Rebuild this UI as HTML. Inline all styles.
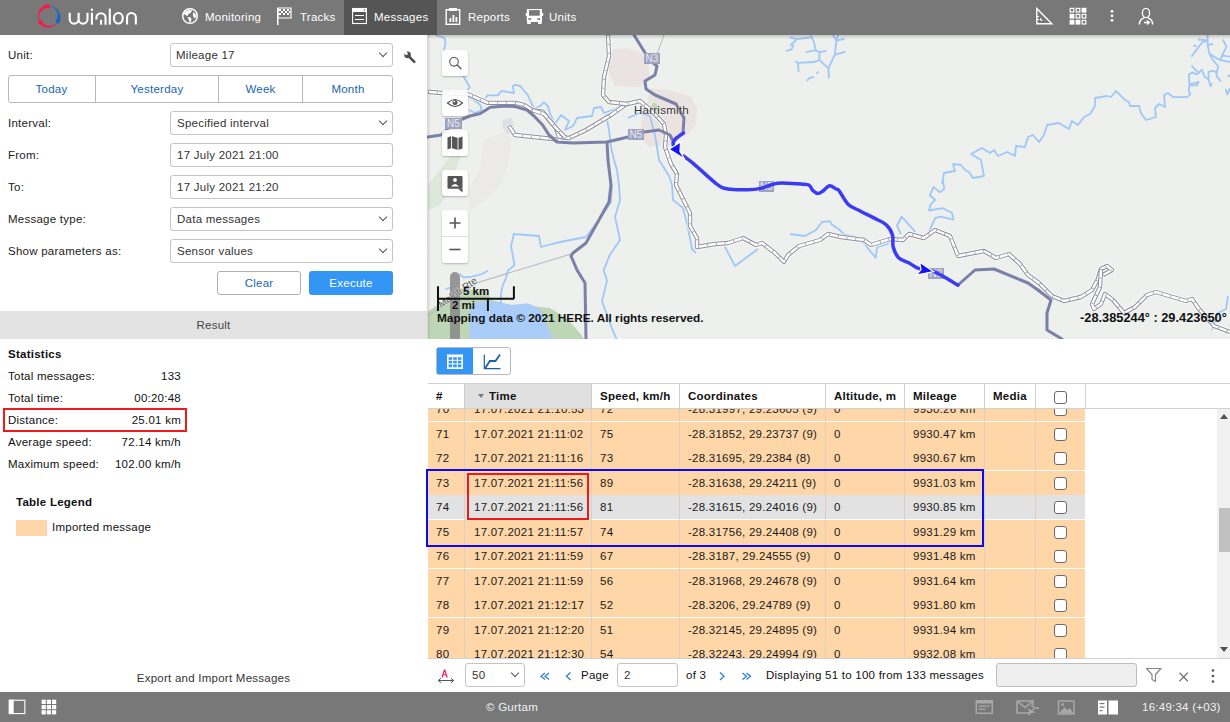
<!DOCTYPE html>
<html><head><meta charset="utf-8">
<style>
*{box-sizing:border-box;margin:0;padding:0}
html,body{width:1230px;height:722px;overflow:hidden;background:#fff}
body{position:relative;font-family:"Liberation Sans",sans-serif;font-size:12px;color:#222}
.a{position:absolute}
.t{position:absolute;font-size:11.5px;letter-spacing:.25px;line-height:14px;white-space:nowrap}
.b{font-weight:bold}
.sel{position:absolute;border:1px solid #c4c4c4;border-radius:3px;background:#fff}
.chev{position:absolute;width:6px;height:6px;border-right:1.3px solid #555;border-bottom:1.3px solid #555;transform:rotate(45deg)}
.btn{position:absolute;border:1px solid #b8b8b8;border-radius:3px;background:#fff;color:#1f6fb8;text-align:center;line-height:22px}
.hdr{position:absolute;left:0;top:0;width:1230px;height:35px;background:#787878}
.nav{position:absolute;top:0;height:35px;color:#fff}
.foot{position:absolute;left:0;top:692px;width:1230px;height:30px;background:#787878}
.mbtn{position:absolute;left:442px;width:26px;height:26px;background:rgba(255,255,255,.88);border-radius:3px;box-shadow:0 1px 2px rgba(0,0,0,.25)}
.row{position:absolute;left:428px;width:658px;height:24px;background:#fed6a7}
.cell{position:absolute;font-size:11.5px;letter-spacing:.25px;line-height:14px;white-space:nowrap;color:#1a1a1a}
.vl{position:absolute;width:1px;background:#d2c4b4}
.cb{position:absolute;width:13px;height:13px;border:1px solid #6a6a6a;border-radius:3px;background:#fff}
</style></head><body>

<!-- HEADER -->
<div class="hdr"></div>
<div class="a" style="left:344px;top:0;width:93px;height:35px;background:#555"></div>
<svg class="a" style="left:0;top:0" width="600" height="35" viewBox="0 0 600 35">
 <!-- logo ring -->
 <path d="M47.73 4.15 L47.18 4.35 L46.63 4.53 L46.10 4.72 L45.57 4.92 L45.06 5.15 L44.56 5.39 L44.08 5.65 L43.60 5.93 L43.15 6.23 L42.71 6.55 L42.28 6.89 L41.87 7.24 L41.48 7.61 L41.11 8.00 L40.76 8.40 L40.43 8.81 L40.12 9.24 L39.83 9.67 L39.56 10.12 L39.31 10.58 L39.08 11.05 L38.88 11.53 L38.70 12.01 L38.54 12.50 L38.41 13.00 L38.30 13.50 L38.21 14.00 L38.15 14.50 L38.11 15.01 L38.09 15.51 L38.10 16.01 L38.13 16.51 L38.18 17.01 L38.25 17.50 L38.35 17.99 L38.47 18.46 L38.61 18.94 L38.77 19.40 L38.95 19.85 L39.16 20.30 L39.53 20.15 L39.39 19.70 L39.28 19.25 L39.19 18.79 L39.13 18.33 L39.08 17.87 L39.06 17.42 L39.06 16.96 L39.08 16.50 L39.12 16.05 L39.18 15.60 L39.26 15.16 L39.37 14.72 L39.49 14.29 L39.64 13.87 L39.80 13.45 L39.99 13.05 L40.19 12.66 L40.41 12.28 L40.64 11.91 L40.90 11.56 L41.17 11.22 L41.45 10.89 L41.75 10.58 L42.06 10.29 L42.38 10.01 L42.72 9.75 L43.06 9.51 L43.42 9.29 L43.79 9.08 L44.16 8.90 L44.54 8.74 L44.92 8.59 L45.32 8.47 L45.71 8.37 L46.11 8.29 L46.51 8.24 L46.90 8.21 L47.30 8.20 L47.70 8.23 L48.09 8.33Z" fill="#ff1450"/>
 <circle cx="47.91" cy="6.24" r="2.10" fill="#ff1450"/>
 <path d="M38.54 22.81 L38.96 23.22 L39.35 23.62 L39.76 24.02 L40.17 24.39 L40.60 24.75 L41.04 25.08 L41.49 25.40 L41.95 25.70 L42.42 25.97 L42.90 26.22 L43.39 26.45 L43.89 26.65 L44.39 26.83 L44.90 26.99 L45.42 27.12 L45.94 27.23 L46.46 27.32 L46.98 27.38 L47.51 27.41 L48.03 27.43 L48.55 27.41 L49.07 27.38 L49.58 27.32 L50.09 27.23 L50.60 27.13 L51.09 27.00 L51.58 26.85 L52.06 26.67 L52.53 26.48 L52.98 26.26 L53.43 26.02 L53.86 25.76 L54.28 25.49 L54.69 25.19 L55.08 24.88 L55.45 24.55 L55.81 24.21 L56.14 23.85 L56.47 23.47 L56.77 23.08 L56.46 22.83 L56.13 23.16 L55.78 23.48 L55.42 23.78 L55.04 24.06 L54.66 24.32 L54.26 24.56 L53.85 24.78 L53.44 24.98 L53.02 25.16 L52.59 25.32 L52.15 25.46 L51.71 25.57 L51.27 25.67 L50.82 25.74 L50.37 25.79 L49.92 25.82 L49.48 25.83 L49.03 25.82 L48.59 25.78 L48.15 25.72 L47.71 25.65 L47.29 25.55 L46.86 25.43 L46.45 25.29 L46.05 25.13 L45.65 24.95 L45.27 24.76 L44.90 24.55 L44.54 24.31 L44.19 24.07 L43.86 23.80 L43.55 23.52 L43.25 23.23 L42.97 22.92 L42.70 22.60 L42.46 22.27 L42.24 21.92 L42.04 21.57 L41.87 21.20 L41.76 20.80Z" fill="#ff1450"/>
 <circle cx="40.15" cy="21.81" r="1.90" fill="#ff1450"/>
 <path d="M50.61 6.16 L51.10 6.25 L51.59 6.35 L52.07 6.48 L52.55 6.62 L53.03 6.79 L53.50 6.97 L53.96 7.18 L54.42 7.41 L54.86 7.66 L55.30 7.93 L55.72 8.22 L56.13 8.54 L56.53 8.87 L56.92 9.22 L57.29 9.59 L57.64 9.98 L57.98 10.38 L58.30 10.81 L58.60 11.25 L58.88 11.70 L59.14 12.17 L59.38 12.65 L59.60 13.15 L59.79 13.66 L59.97 14.18 L60.11 14.71 L60.24 15.25 L60.34 15.80 L60.41 16.35 L60.46 16.91 L60.48 17.47 L60.48 18.04 L60.44 18.61 L60.38 19.18 L60.30 19.75 L60.18 20.32 L60.04 20.89 L59.87 21.45 L59.68 22.00 L59.45 22.55 L55.81 20.45 L56.06 20.14 L56.29 19.81 L56.51 19.47 L56.71 19.12 L56.89 18.76 L57.05 18.38 L57.20 17.99 L57.33 17.60 L57.43 17.19 L57.52 16.78 L57.59 16.36 L57.63 15.94 L57.66 15.51 L57.66 15.08 L57.64 14.64 L57.60 14.21 L57.54 13.77 L57.45 13.34 L57.34 12.91 L57.21 12.48 L57.06 12.06 L56.88 11.64 L56.68 11.23 L56.46 10.83 L56.22 10.44 L55.96 10.06 L55.68 9.70 L55.38 9.34 L55.06 9.01 L54.72 8.68 L54.37 8.38 L53.99 8.09 L53.61 7.82 L53.20 7.57 L52.79 7.34 L52.36 7.13 L51.92 6.95 L51.46 6.79 L51.00 6.66 L50.54 6.55Z" fill="#1565c8"/>
 <circle cx="57.63" cy="21.50" r="2.10" fill="#1565c8"/>
 <g fill="none" stroke="#fff" stroke-width="2.1">
  <path d="M69.7 12.7 V19.15 A4.45 4.45 0 0 0 78.6 19.15 V12.7 M78.6 19.15 A4.45 4.45 0 0 0 87.5 19.15 V12.7"/>
  <path d="M91.9 12.7 V24.7"/>
  <path d="M96.4 19.6 V17.8 A4.575 4.575 0 0 1 105.55 17.8 V24.7"/>
  <path d="M109.8 8.6 V24.6"/>
  <ellipse cx="118.35" cy="18.25" rx="4.4" ry="5.3"/>
  <path d="M127.05 24.6 V17.35 A4.4 4.4 0 0 1 135.85 17.35 V24.6"/>
 </g>
 <rect x="90.85" y="8.6" width="2.1" height="2.3" fill="#fff"/>
 <rect x="100" y="19.8" width="2.1" height="4.9" fill="#fff"/>
 <!-- globe -->
 <g transform="translate(190,16)">
  <circle r="7.3" fill="none" stroke="#fff" stroke-width="1.5"/>
  <path d="M-5.5 -4 C-3 -6 0 -6.5 2 -5.8 L1 -3.5 L-1.5 -2 L-2.5 0 L-4.5 -1 L-6 -2 Z" fill="#fff"/>
  <path d="M-2.5 1 L1 1.5 L1.5 4 L0 7 L-1 4.5 Z" fill="#fff"/>
  <path d="M3.5 -4 L5 -2.5 L6.5 0 L5 2.5 L3.5 1 L2.8 -1.5 Z" fill="#fff"/>
 </g>
 <!-- flag -->
 <g fill="#fff">
  <rect x="277" y="8" width="1.5" height="17"/>
  <path d="M278 8 H291 V18 H278 Z" fill="none" stroke="#fff" stroke-width="1.2"/>
  <rect x="279" y="9" width="2" height="2"/><rect x="283" y="9" width="2" height="2"/><rect x="287" y="9" width="2" height="2"/>
  <rect x="281" y="11" width="2" height="2"/><rect x="285" y="11" width="2" height="2"/><rect x="289" y="11" width="1.5" height="2"/>
  <rect x="279" y="13" width="2" height="2"/><rect x="283" y="13" width="2" height="2"/><rect x="287" y="13" width="2" height="2"/>
 </g>
 <!-- messages doc -->
 <rect x="352.6" y="8.5" width="13.8" height="15" fill="none" stroke="#fff" stroke-width="1.1"/>
 <rect x="352.1" y="8" width="14.8" height="4" fill="#fff"/>
 <circle cx="364.4" cy="10" r="0.8" fill="#555"/>
 <path d="M355 15.5 H364 M355 19.5 H364" stroke="#fff" stroke-width="1"/>
 <!-- reports -->
 <g fill="none" stroke="#fff" stroke-width="1.4">
  <rect x="446.2" y="9.7" width="13.5" height="14.6"/>
 </g>
 <rect x="449" y="8" width="8" height="3" fill="#fff"/>
 <rect x="449.5" y="18" width="1.8" height="4" fill="#fff"/>
 <rect x="452.5" y="15" width="1.8" height="7" fill="#fff"/>
 <rect x="455.5" y="17" width="1.8" height="5" fill="#fff"/>
 <!-- units bus -->
 <path d="M526.8 9 H542 V22 H541.6 V24 H538 V22 H530.8 V24 H527.2 V22 H526.8 Z" fill="#fff"/>
 <rect x="529" y="10.1" width="10.8" height="5.6" fill="#787878"/>
 <rect x="528.3" y="18.2" width="2.9" height="1.6" fill="#787878"/>
 <rect x="537.3" y="18.2" width="2.9" height="1.6" fill="#787878"/>
 <rect x="525.8" y="13" width="1.2" height="3" fill="#fff"/><rect x="541.8" y="13" width="1.4" height="3" fill="#fff"/>
</svg>
<div class="t" style="left:205px;top:10px;color:#fff">Monitoring</div>
<div class="t" style="left:300px;top:10px;color:#fff">Tracks</div>
<div class="t" style="left:374px;top:10px;color:#fff">Messages</div>
<div class="t" style="left:468px;top:10px;color:#fff">Reports</div>
<div class="t" style="left:549px;top:10px;color:#fff">Units</div>
<svg class="a" style="left:1030px;top:0" width="200" height="35" viewBox="1030 0 200 35">
 <!-- ruler triangle -->
 <path d="M1036.8 8.5 V23.7 H1051.8 Z" fill="none" stroke="#fff" stroke-width="1.4" stroke-linejoin="miter"/>
 <path d="M1036.8 16.5 H1039 M1036.8 19.5 H1039" stroke="#fff" stroke-width="1"/>
 <path d="M1040 18 L1043 20.5 H1040 Z" fill="#fff"/>
 <!-- grid 3x3 -->
 <g fill="none" stroke="#fff" stroke-width="1.2">
  <rect x="1070.2" y="8.4" width="3.6" height="3.6"/><rect x="1076.2" y="8.4" width="3.6" height="3.6"/>
  <rect x="1076.2" y="14.4" width="3.6" height="3.6"/><rect x="1082.2" y="14.4" width="3.6" height="3.6"/>
  <rect x="1082.2" y="20.4" width="3.6" height="3.6"/>
 </g>
 <g fill="#fff">
  <rect x="1081.6" y="7.8" width="4.8" height="4.8"/>
  <rect x="1069.6" y="13.8" width="4.8" height="4.8"/>
  <rect x="1069.6" y="19.8" width="4.8" height="4.8"/><rect x="1075.6" y="19.8" width="4.8" height="4.8"/>
 </g>
 <!-- dots -->
 <g fill="#fff"><circle cx="1112" cy="11.3" r="1.4"/><circle cx="1112" cy="15.8" r="1.4"/><circle cx="1112" cy="20.3" r="1.4"/></g>
 <!-- user -->
 <g fill="none" stroke="#fff" stroke-width="1.4">
  <ellipse cx="1146" cy="13" rx="3.6" ry="4.6"/>
  <path d="M1139.3 24.5 C1139.5 20.5 1142 18.5 1144 18 M1148 18 C1150 18.5 1152.5 20.5 1152.7 24.5"/>
 </g>
 <path d="M1144 22.5 H1148.5 M1147 20.5 L1149.3 22.5 L1147 24.5" fill="none" stroke="#fff" stroke-width="1.3"/>
</svg>

<!-- LEFT PANEL -->
<div class="t" style="left:8px;top:48px">Unit:</div>
<div class="sel" style="left:170px;top:43px;width:223px;height:24px"></div>
<div class="t" style="left:176px;top:48px;color:#333">Mileage 17</div>
<div class="chev" style="left:380px;top:50px"></div>
<svg class="a" style="left:400px;top:48px" width="18" height="18" viewBox="400 48 18 18">
 <path d="M409 56.5 L414.3 61.8" stroke="#505050" stroke-width="2.6" stroke-linecap="round"/>
 <circle cx="407.6" cy="54.9" r="3.3" fill="#505050"/>
 <circle cx="406.5" cy="53.8" r="1.3" fill="#fff"/>
 <path d="M405.6 54.6 L403 52 L405.2 49.8 L407.4 52.7 Z" fill="#fff"/>
</svg>
<div class="a" style="left:8px;top:75px;width:385px;height:28px;border:1px solid #b8b8b8;border-radius:3px"></div>
<div class="a" style="left:95px;top:76px;width:1px;height:26px;background:#b8b8b8"></div>
<div class="a" style="left:218px;top:76px;width:1px;height:26px;background:#b8b8b8"></div>
<div class="a" style="left:302px;top:76px;width:1px;height:26px;background:#b8b8b8"></div>
<div class="t" style="left:8px;top:82px;width:87px;text-align:center;color:#1a64b0">Today</div>
<div class="t" style="left:96px;top:82px;width:122px;text-align:center;color:#1a64b0">Yesterday</div>
<div class="t" style="left:219px;top:82px;width:83px;text-align:center;color:#1a64b0">Week</div>
<div class="t" style="left:303px;top:82px;width:90px;text-align:center;color:#1a64b0">Month</div>

<div class="t" style="left:8px;top:116px">Interval:</div>
<div class="sel" style="left:170px;top:111px;width:223px;height:24px"></div>
<div class="t" style="left:177px;top:116px;color:#333">Specified interval</div>
<div class="chev" style="left:380px;top:118px"></div>

<div class="t" style="left:8px;top:148px">From:</div>
<div class="sel" style="left:170px;top:143px;width:223px;height:24px"></div>
<div class="t" style="left:177px;top:148px;color:#333">17 July 2021 21:00</div>

<div class="t" style="left:8px;top:180px">To:</div>
<div class="sel" style="left:170px;top:175px;width:223px;height:24px"></div>
<div class="t" style="left:177px;top:180px;color:#333">17 July 2021 21:20</div>

<div class="t" style="left:8px;top:212px">Message type:</div>
<div class="sel" style="left:170px;top:207px;width:223px;height:24px"></div>
<div class="t" style="left:177px;top:212px;color:#333">Data messages</div>
<div class="chev" style="left:380px;top:214px"></div>

<div class="t" style="left:8px;top:244px">Show parameters as:</div>
<div class="sel" style="left:170px;top:239px;width:223px;height:24px"></div>
<div class="t" style="left:177px;top:244px;color:#333">Sensor values</div>
<div class="chev" style="left:380px;top:246px"></div>

<div class="a" style="left:217px;top:271px;width:84px;height:24px;border:1px solid #b0b0b0;border-radius:3px"></div>
<div class="t" style="left:217px;top:276px;width:84px;text-align:center;color:#1a64b0">Clear</div>
<div class="a" style="left:309px;top:271px;width:84px;height:24px;background:#3396f4;border-radius:3px"></div>
<div class="t" style="left:309px;top:276px;width:84px;text-align:center;color:#fff">Execute</div>

<div class="a" style="left:0;top:311px;width:427px;height:28px;background:#e3e3e3"></div>
<div class="t" style="left:0;top:318px;width:427px;text-align:center;color:#444">Result</div>

<div class="t b" style="left:8px;top:347px;color:#111">Statistics</div>
<div class="t" style="left:8px;top:369px;color:#111">Total messages:</div>
<div class="t" style="left:8px;top:369px;width:173px;text-align:right;color:#111">133</div>
<div class="t" style="left:8px;top:391px;color:#111">Total time:</div>
<div class="t" style="left:8px;top:391px;width:173px;text-align:right;color:#111">00:20:48</div>
<div class="t" style="left:8px;top:413px;color:#111">Distance:</div>
<div class="t" style="left:8px;top:413px;width:173px;text-align:right;color:#111">25.01 km</div>
<div class="t" style="left:8px;top:435px;color:#111">Average speed:</div>
<div class="t" style="left:8px;top:435px;width:173px;text-align:right;color:#111">72.14 km/h</div>
<div class="t" style="left:8px;top:457px;color:#111">Maximum speed:</div>
<div class="t" style="left:8px;top:457px;width:173px;text-align:right;color:#111">102.00 km/h</div>
<div class="a" style="left:3px;top:408px;width:184px;height:24px;border:2px solid #ec1a1a"></div>

<div class="t b" style="left:16px;top:495px;color:#111">Table Legend</div>
<div class="a" style="left:16px;top:520px;width:31px;height:16px;background:#fed6a7"></div>
<div class="t" style="left:52px;top:520px;color:#111">Imported message</div>

<div class="t" style="left:0;top:671px;width:427px;text-align:center;color:#333">Export and Import Messages</div>

<!-- MAP -->
<svg class="a" style="left:427px;top:35px" width="803" height="304" viewBox="427 35 803 304">
<rect x="427" y="35" width="803" height="304" fill="#eef0ee"/>
<path d="M611 50 L625 48 L640 52 L648 62 L650 80 L640 87 L615 86 L608 70 Z" fill="#e9dfdc" opacity="0.75"/>
<path d="M650 88 L668 90 L690 96 L697 108 L696 125 L688 134 L668 147 L648 146 L640 136 L642 118 L648 100 Z" fill="#e9dfdc" opacity="0.75"/>
<path d="M484 140 L505 132 L512 140 L508 165 L500 185 L485 200 L470 210 L468 190 L480 170 Z" fill="#e9dfdc" opacity="0.38"/>
<path d="M503 120 L512 118 L515 132 L507 134 L502 127 Z" fill="#dcdae4" opacity="0.8"/>
<path d="M428 185 L440 170 L455 150 L462 153 L455 172 L450 190 L440 205 L428 210 Z" fill="#bdd6b5" opacity="0.35"/>
<path d="M428 311.5 L439.6 303.2 L459.6 288.3 L486 291.6 L492 300 L511 305 L535.3 306.4 L550 308 L566 317.8 L580.8 334 L584 339 L428 339 Z" fill="#bdd6b5"/>
<path d="M469.6 339 L469.6 310.7 L477 301.6 L494.5 301.6 L511 305 L528 303.2 L535 306.4 L541.8 311.3 L545 321 L553 339 Z" fill="#a9ccf8"/>
<path d="M654 102 L660 108 L655 115 L650 108 Z" fill="#bdd6b5"/>
<path d="M435.5 35.0 L444.5 38.0 L445.5 43.0 L444.0 50.0 L451.0 60.0 L464.0 77.0 L469.7 87.3 L467.3 90.0" fill="none" stroke="#9ec8f8" stroke-width="1.8" stroke-linejoin="round"/>
<path d="M468.0 97.0 L474.0 100.0 L480.3 105.0 L481.6 110.0 L475.0 113.0 L469.0 110.0" fill="none" stroke="#9ec8f8" stroke-width="1.8" stroke-linejoin="round"/>
<path d="M485.3 98.6 L487.2 95.4 L497.8 95.4 L501.5 91.0 L514.0 93.0 L512.7 86.0 L515.2 84.8 L520.2 86.0 L527.7 94.8 L534.0 108.5 L540.2 106.0 L543.9 102.3 L548.0 106.0 L550.0 114.0 L555.0 124.0 L561.0 115.0 L569.0 121.0 L565.0 130.0 L573.0 126.0 L577.0 118.0 L592.0 116.0 L594.0 108.0 L601.0 107.0 L604.0 113.0 L615.0 109.0 L621.0 106.0 L628.0 103.0" fill="none" stroke="#9ec8f8" stroke-width="1.8" stroke-linejoin="round"/>
<path d="M606.0 114.0 L609.0 130.0 L611.0 147.0 L614.0 160.0 L617.0 170.0 L619.0 185.0 L620.0 200.0 L615.0 217.0 L618.0 230.0 L620.0 240.0 L610.0 254.4 L603.6 270.6 L607.0 280.4 L602.0 301.5 L611.7 327.6 L616.6 339.0" fill="none" stroke="#9ec8f8" stroke-width="1.8" stroke-linejoin="round"/>
<path d="M513.0 234.0 L539.0 236.0 L541.0 247.0 L552.0 244.0 L565.0 241.0 L586.0 237.0 L601.0 217.0 L611.0 202.0 L612.0 185.0" fill="none" stroke="#9ec8f8" stroke-width="1.8" stroke-linejoin="round"/>
<path d="M459.6 274.0 L463.7 277.5 L472.0 276.6 L482.0 274.0 L487.9 270.8" fill="none" stroke="#9ec8f8" stroke-width="1.8" stroke-linejoin="round"/>
<path d="M445.5 289.0 L452.0 287.4" fill="none" stroke="#9ec8f8" stroke-width="1.8" stroke-linejoin="round"/>
<path d="M628.0 118.0 L640.0 113.0 L650.0 116.0 L655.0 135.0 L657.0 147.0 L659.0 160.0 L669.0 176.0 L672.0 185.0 L673.0 200.0 L683.0 208.0 L688.0 228.0 L692.0 249.0 L696.0 253.0" fill="none" stroke="#9ec8f8" stroke-width="1.8" stroke-linejoin="round"/>
<path d="M810.4 35.0 L814.0 42.2 L815.8 50.3 L819.4 52.1 L819.4 60.2 L828.4 68.3 L828.9 78.2" fill="none" stroke="#9ec8f8" stroke-width="1.8" stroke-linejoin="round"/>
<path d="M819.4 60.2 L814.0 62.0 L797.8 62.9 L795.1 61.1" fill="none" stroke="#9ec8f8" stroke-width="1.8" stroke-linejoin="round"/>
<path d="M797.8 62.9 L798.7 71.9" fill="none" stroke="#9ec8f8" stroke-width="1.8" stroke-linejoin="round"/>
<path d="M815.8 50.3 L805.9 52.1" fill="none" stroke="#9ec8f8" stroke-width="1.8" stroke-linejoin="round"/>
<path d="M819.4 52.1 L826.6 50.8" fill="none" stroke="#9ec8f8" stroke-width="1.8" stroke-linejoin="round"/>
<path d="M810.4 37.7 L796.9 39.0 L789.7 37.7" fill="none" stroke="#9ec8f8" stroke-width="1.8" stroke-linejoin="round"/>
<path d="M796.9 39.0 L794.2 42.2 L790.6 44.9 L793.3 45.8 L791.5 49.4 L786.1 51.2" fill="none" stroke="#9ec8f8" stroke-width="1.8" stroke-linejoin="round"/>
<path d="M828.4 68.3 L834.7 54.8 L845.5 51.7" fill="none" stroke="#9ec8f8" stroke-width="1.8" stroke-linejoin="round"/>
<path d="M834.7 54.8 L836.5 40.4 L844.6 39.0" fill="none" stroke="#9ec8f8" stroke-width="1.8" stroke-linejoin="round"/>
<path d="M836.5 40.4 L832.9 35.0" fill="none" stroke="#9ec8f8" stroke-width="1.8" stroke-linejoin="round"/>
<path d="M836.5 40.4 L838.3 35.0" fill="none" stroke="#9ec8f8" stroke-width="1.8" stroke-linejoin="round"/>
<path d="M806.8 80.9 L809.0 78.2 L814.0 76.9" fill="none" stroke="#9ec8f8" stroke-width="1.8" stroke-linejoin="round"/>
<path d="M816.7 73.7 L818.5 71.5" fill="none" stroke="#9ec8f8" stroke-width="1.8" stroke-linejoin="round"/>
<path d="M725.0 247.0 L735.0 266.0 L743.0 260.0 L758.0 249.0" fill="none" stroke="#9ec8f8" stroke-width="1.8" stroke-linejoin="round"/>
<path d="M790.0 234.0 L805.0 236.0 L816.0 230.0 L822.0 222.0 L830.0 221.1 L831.5 224.2 L839.1 229.5 L843.7 234.1 L855.9 237.1 L865.0 244.0 L868.1 248.6 L875.7 257.7 L877.2 247.0 L887.9 244.0 L887.9 237.9" fill="none" stroke="#9ec8f8" stroke-width="1.8" stroke-linejoin="round"/>
<path d="M897.0 225.7 L901.6 216.6 L915.3 231.8" fill="none" stroke="#9ec8f8" stroke-width="1.8" stroke-linejoin="round"/>
<path d="M901.6 216.6 L897.0 225.7 L900.9 234.1" fill="none" stroke="#9ec8f8" stroke-width="1.8" stroke-linejoin="round"/>
<path d="M929.0 231.8 L935.1 218.1 L940.5 216.6 L953.4 219.6 L951.9 212.8 L942.8 208.2 L929.0 210.5 L930.6 204.4 L935.1 199.8 L929.8 195.2 L933.6 186.9 L939.7 192.2 L944.3 189.1 L942.8 180.0" fill="none" stroke="#9ec8f8" stroke-width="1.8" stroke-linejoin="round"/>
<path d="M942.0 184.0 L944.0 173.0 L955.0 171.0 L953.0 164.0 L961.0 165.0 L965.0 170.0 L969.0 172.0 L973.0 178.0 L984.0 176.0 L981.0 160.0 L971.0 154.0 L982.0 148.0 L990.0 153.0 L994.0 150.0 L998.0 156.0 L1007.0 152.0 L1015.0 156.0 L1016.0 146.0 L1025.0 147.0 L1028.0 137.0 L1033.0 135.0 L1039.0 142.0 L1044.0 135.0 L1047.0 125.0 L1059.0 123.0 L1069.0 129.0 L1072.0 121.0 L1078.0 125.0 L1084.0 117.0 L1090.0 114.0 L1095.0 106.0 L1095.0 98.0 L1107.0 96.0 L1111.0 97.0 L1116.0 91.0 L1125.0 100.0 L1129.0 102.0 L1130.0 106.0 L1139.0 106.0 L1141.0 113.0 L1146.0 120.0 L1156.0 117.0 L1155.0 108.0 L1159.0 104.0 L1165.0 107.0 L1164.0 95.0 L1168.0 93.0 L1173.0 97.0 L1186.9 97.1 L1190.5 94.4 L1188.7 90.8" fill="none" stroke="#9ec8f8" stroke-width="1.8" stroke-linejoin="round"/>
<path d="M1188.7 90.8 L1189.6 84.5 L1198.6 81.8 L1196.8 85.4 L1190.5 85.4" fill="none" stroke="#9ec8f8" stroke-width="1.8" stroke-linejoin="round"/>
<path d="M1189.6 84.5 L1188.7 74.6 L1192.8 72.4 L1195.9 74.6 L1198.6 72.8 L1191.4 65.6" fill="none" stroke="#9ec8f8" stroke-width="1.8" stroke-linejoin="round"/>
<path d="M1198.6 72.8 L1201.8 69.7 L1204.9 77.3 L1208.5 79.1 L1208.5 71.9 L1213.0 70.6 L1216.6 72.8 L1216.6 76.4 L1221.1 81.4" fill="none" stroke="#9ec8f8" stroke-width="1.8" stroke-linejoin="round"/>
<path d="M1208.5 79.1 L1210.3 86.3 L1212.1 83.2" fill="none" stroke="#9ec8f8" stroke-width="1.8" stroke-linejoin="round"/>
<path d="M1216.6 72.8 L1218.4 66.5 L1213.0 60.2 L1209.4 53.9 L1207.6 44.9 L1207.6 35.0" fill="none" stroke="#9ec8f8" stroke-width="1.8" stroke-linejoin="round"/>
<path d="M1207.6 40.4 L1197.7 39.5" fill="none" stroke="#9ec8f8" stroke-width="1.8" stroke-linejoin="round"/>
<path d="M1207.6 40.4 L1202.2 42.2 L1191.4 56.6" fill="none" stroke="#9ec8f8" stroke-width="1.8" stroke-linejoin="round"/>
<path d="M1196.8 45.8 L1193.2 45.8" fill="none" stroke="#9ec8f8" stroke-width="1.8" stroke-linejoin="round"/>
<path d="M1207.6 44.9 L1213.0 44.0" fill="none" stroke="#9ec8f8" stroke-width="1.8" stroke-linejoin="round"/>
<path d="M1209.4 53.9 L1220.2 60.2 L1230.0 62.0" fill="none" stroke="#9ec8f8" stroke-width="1.8" stroke-linejoin="round"/>
<path d="M1220.2 60.2 L1222.0 55.7 L1226.5 46.7 L1222.9 39.5" fill="none" stroke="#9ec8f8" stroke-width="1.8" stroke-linejoin="round"/>
<path d="M1222.0 55.7 L1230.0 56.6" fill="none" stroke="#9ec8f8" stroke-width="1.8" stroke-linejoin="round"/>
<path d="M1227.4 75.5 L1230.0 76.0" fill="none" stroke="#9ec8f8" stroke-width="1.8" stroke-linejoin="round"/>
<path d="M1225.6 89.0 L1227.4 94.4 L1230.0 88.0" fill="none" stroke="#9ec8f8" stroke-width="1.8" stroke-linejoin="round"/>
<path d="M1228.0 296.0 L1226.0 309.0 L1218.0 313.0 L1212.0 330.0" fill="none" stroke="#9ec8f8" stroke-width="1.8" stroke-linejoin="round"/>
<path d="M501.0 303.2 L501.0 293.3 L502.8 285.0 L506.0 278.3 L507.8 270.8 L514.5 265.0 L513.6 260.0 L511.0 246.0 L512.5 240.0 L514.0 233.0" fill="none" stroke="#9ec8f8" stroke-width="1.8" stroke-linejoin="round"/>
<path d="M571 254 L478 282.4 L428 315.7" fill="none" stroke="#b4b8c4" stroke-width="1.1"/>
<path d="M664 35 L657 54" fill="none" stroke="#b9bcc6" stroke-width="1"/>
<path d="M428.0 91.7 L441.7 93.0 L467.9 94.2 L487.8 102.9 L515.2 102.9 L524.0 104.8 L532.7 110.4 L542.6 111.6 L549.0 120.0 L556.0 128.0 L559.0 137.0 L569.0 138.0 L586.0 130.0 L611.0 115.0 L628.0 103.0" fill="none" stroke="#ffffff" stroke-width="6.2" stroke-linejoin="round" opacity="0.7"/>
<path d="M509.0 126.0 L515.0 135.0 L553.0 139.0 L563.0 141.0" fill="none" stroke="#ffffff" stroke-width="6.2" stroke-linejoin="round" opacity="0.7"/>
<path d="M532.0 110.0 L544.0 114.0 L556.0 128.0 L566.0 138.0" fill="none" stroke="#ffffff" stroke-width="6.2" stroke-linejoin="round" opacity="0.7"/>
<path d="M608.0 35.0 L609.0 56.0 L604.0 77.0 L603.0 95.0 L609.0 102.0 L627.0 104.0 L640.0 101.0 L653.0 112.0 L664.0 124.0 L666.0 135.0 L665.0 147.0 L671.0 164.0 L677.0 174.0 L676.0 185.0 L690.0 213.0 L690.0 226.0 L697.0 238.0 L697.0 247.0 L715.0 244.0 L728.0 243.0 L743.0 238.0 L756.0 245.0 L762.0 243.0 L775.0 253.0 L784.0 262.0 L788.0 255.0 L799.0 246.0 L820.0 240.0 L828.0 234.0 L841.0 237.0 L864.0 240.0 L871.0 245.0 L890.0 239.0 L903.0 240.0 L909.0 234.0 L924.0 238.0 L935.0 230.0 L950.0 236.0 L958.0 256.0 L984.0 251.0 L996.0 258.0 L1009.0 254.0 L1020.0 264.0 L1028.0 275.0 L1039.0 283.0 L1052.0 296.0 L1064.0 301.0 L1081.0 297.0 L1092.0 290.0 L1098.0 279.0 L1101.0 269.0 L1107.0 266.0 L1112.0 270.0 L1103.0 275.0" fill="none" stroke="#ffffff" stroke-width="6.2" stroke-linejoin="round" opacity="0.7"/>
<path d="M1101.0 269.0 L1100.0 287.0 L1092.0 304.0 L1094.0 309.0 L1101.0 304.0 L1105.0 294.0 L1113.0 300.0 L1124.0 313.0 L1135.0 307.0 L1147.0 295.0 L1156.0 292.0 L1186.0 301.0 L1192.0 299.0 L1199.0 309.0 L1214.0 326.0 L1230.0 332.0" fill="none" stroke="#ffffff" stroke-width="6.2" stroke-linejoin="round" opacity="0.7"/>
<path d="M428.0 91.7 L441.7 93.0 L467.9 94.2 L487.8 102.9 L515.2 102.9 L524.0 104.8 L532.7 110.4 L542.6 111.6 L549.0 120.0 L556.0 128.0 L559.0 137.0 L569.0 138.0 L586.0 130.0 L611.0 115.0 L628.0 103.0" fill="none" stroke="#8e8e9c" stroke-width="4.4" stroke-linejoin="round"/>
<path d="M428.0 91.7 L441.7 93.0 L467.9 94.2 L487.8 102.9 L515.2 102.9 L524.0 104.8 L532.7 110.4 L542.6 111.6 L549.0 120.0 L556.0 128.0 L559.0 137.0 L569.0 138.0 L586.0 130.0 L611.0 115.0 L628.0 103.0" fill="none" stroke="#ffffff" stroke-width="2.4" stroke-linejoin="round"/>
<path d="M428.0 91.7 L441.7 93.0 L467.9 94.2 L487.8 102.9 L515.2 102.9 L524.0 104.8 L532.7 110.4 L542.6 111.6 L549.0 120.0 L556.0 128.0 L559.0 137.0 L569.0 138.0 L586.0 130.0 L611.0 115.0 L628.0 103.0" fill="none" stroke="#a0a0ac" stroke-width="2.4" stroke-dasharray="0.9 8"/>
<path d="M509.0 126.0 L515.0 135.0 L553.0 139.0 L563.0 141.0" fill="none" stroke="#8e8e9c" stroke-width="4.4" stroke-linejoin="round"/>
<path d="M509.0 126.0 L515.0 135.0 L553.0 139.0 L563.0 141.0" fill="none" stroke="#ffffff" stroke-width="2.4" stroke-linejoin="round"/>
<path d="M509.0 126.0 L515.0 135.0 L553.0 139.0 L563.0 141.0" fill="none" stroke="#a0a0ac" stroke-width="2.4" stroke-dasharray="0.9 8"/>
<path d="M532.0 110.0 L544.0 114.0 L556.0 128.0 L566.0 138.0" fill="none" stroke="#8e8e9c" stroke-width="4.4" stroke-linejoin="round"/>
<path d="M532.0 110.0 L544.0 114.0 L556.0 128.0 L566.0 138.0" fill="none" stroke="#ffffff" stroke-width="2.4" stroke-linejoin="round"/>
<path d="M532.0 110.0 L544.0 114.0 L556.0 128.0 L566.0 138.0" fill="none" stroke="#a0a0ac" stroke-width="2.4" stroke-dasharray="0.9 8"/>
<path d="M608.0 35.0 L609.0 56.0 L604.0 77.0 L603.0 95.0 L609.0 102.0 L627.0 104.0 L640.0 101.0 L653.0 112.0 L664.0 124.0 L666.0 135.0 L665.0 147.0 L671.0 164.0 L677.0 174.0 L676.0 185.0 L690.0 213.0 L690.0 226.0 L697.0 238.0 L697.0 247.0 L715.0 244.0 L728.0 243.0 L743.0 238.0 L756.0 245.0 L762.0 243.0 L775.0 253.0 L784.0 262.0 L788.0 255.0 L799.0 246.0 L820.0 240.0 L828.0 234.0 L841.0 237.0 L864.0 240.0 L871.0 245.0 L890.0 239.0 L903.0 240.0 L909.0 234.0 L924.0 238.0 L935.0 230.0 L950.0 236.0 L958.0 256.0 L984.0 251.0 L996.0 258.0 L1009.0 254.0 L1020.0 264.0 L1028.0 275.0 L1039.0 283.0 L1052.0 296.0 L1064.0 301.0 L1081.0 297.0 L1092.0 290.0 L1098.0 279.0 L1101.0 269.0 L1107.0 266.0 L1112.0 270.0 L1103.0 275.0" fill="none" stroke="#8e8e9c" stroke-width="4.4" stroke-linejoin="round"/>
<path d="M608.0 35.0 L609.0 56.0 L604.0 77.0 L603.0 95.0 L609.0 102.0 L627.0 104.0 L640.0 101.0 L653.0 112.0 L664.0 124.0 L666.0 135.0 L665.0 147.0 L671.0 164.0 L677.0 174.0 L676.0 185.0 L690.0 213.0 L690.0 226.0 L697.0 238.0 L697.0 247.0 L715.0 244.0 L728.0 243.0 L743.0 238.0 L756.0 245.0 L762.0 243.0 L775.0 253.0 L784.0 262.0 L788.0 255.0 L799.0 246.0 L820.0 240.0 L828.0 234.0 L841.0 237.0 L864.0 240.0 L871.0 245.0 L890.0 239.0 L903.0 240.0 L909.0 234.0 L924.0 238.0 L935.0 230.0 L950.0 236.0 L958.0 256.0 L984.0 251.0 L996.0 258.0 L1009.0 254.0 L1020.0 264.0 L1028.0 275.0 L1039.0 283.0 L1052.0 296.0 L1064.0 301.0 L1081.0 297.0 L1092.0 290.0 L1098.0 279.0 L1101.0 269.0 L1107.0 266.0 L1112.0 270.0 L1103.0 275.0" fill="none" stroke="#ffffff" stroke-width="2.4" stroke-linejoin="round"/>
<path d="M608.0 35.0 L609.0 56.0 L604.0 77.0 L603.0 95.0 L609.0 102.0 L627.0 104.0 L640.0 101.0 L653.0 112.0 L664.0 124.0 L666.0 135.0 L665.0 147.0 L671.0 164.0 L677.0 174.0 L676.0 185.0 L690.0 213.0 L690.0 226.0 L697.0 238.0 L697.0 247.0 L715.0 244.0 L728.0 243.0 L743.0 238.0 L756.0 245.0 L762.0 243.0 L775.0 253.0 L784.0 262.0 L788.0 255.0 L799.0 246.0 L820.0 240.0 L828.0 234.0 L841.0 237.0 L864.0 240.0 L871.0 245.0 L890.0 239.0 L903.0 240.0 L909.0 234.0 L924.0 238.0 L935.0 230.0 L950.0 236.0 L958.0 256.0 L984.0 251.0 L996.0 258.0 L1009.0 254.0 L1020.0 264.0 L1028.0 275.0 L1039.0 283.0 L1052.0 296.0 L1064.0 301.0 L1081.0 297.0 L1092.0 290.0 L1098.0 279.0 L1101.0 269.0 L1107.0 266.0 L1112.0 270.0 L1103.0 275.0" fill="none" stroke="#a0a0ac" stroke-width="2.4" stroke-dasharray="0.9 8"/>
<path d="M1101.0 269.0 L1100.0 287.0 L1092.0 304.0 L1094.0 309.0 L1101.0 304.0 L1105.0 294.0 L1113.0 300.0 L1124.0 313.0 L1135.0 307.0 L1147.0 295.0 L1156.0 292.0 L1186.0 301.0 L1192.0 299.0 L1199.0 309.0 L1214.0 326.0 L1230.0 332.0" fill="none" stroke="#8e8e9c" stroke-width="4.4" stroke-linejoin="round"/>
<path d="M1101.0 269.0 L1100.0 287.0 L1092.0 304.0 L1094.0 309.0 L1101.0 304.0 L1105.0 294.0 L1113.0 300.0 L1124.0 313.0 L1135.0 307.0 L1147.0 295.0 L1156.0 292.0 L1186.0 301.0 L1192.0 299.0 L1199.0 309.0 L1214.0 326.0 L1230.0 332.0" fill="none" stroke="#ffffff" stroke-width="2.4" stroke-linejoin="round"/>
<path d="M1101.0 269.0 L1100.0 287.0 L1092.0 304.0 L1094.0 309.0 L1101.0 304.0 L1105.0 294.0 L1113.0 300.0 L1124.0 313.0 L1135.0 307.0 L1147.0 295.0 L1156.0 292.0 L1186.0 301.0 L1192.0 299.0 L1199.0 309.0 L1214.0 326.0 L1230.0 332.0" fill="none" stroke="#a0a0ac" stroke-width="2.4" stroke-dasharray="0.9 8"/>
<path d="M428.0 137.0 L441.0 135.0 L455.0 122.0 L470.0 116.0 L480.3 113.5 L490.3 107.3 L505.3 106.0 L515.2 106.6 L527.0 110.0 L534.0 116.0 L542.6 125.0 L549.0 135.0 L557.0 142.0 L573.0 143.0 L607.0 142.0 L628.0 137.0 L644.0 132.0 L659.0 130.0 L670.0 135.0 L673.0 141.0" fill="none" stroke="#7b80a7" stroke-width="3" stroke-linejoin="round" stroke-linecap="round"/>
<path d="M607.0 142.0 L608.0 160.0 L611.0 185.0 L609.0 202.0 L586.0 243.0 L573.0 253.0 L571.0 256.0 L577.0 270.0 L585.0 283.0 L586.0 339.0" fill="none" stroke="#7b80a7" stroke-width="3" stroke-linejoin="round" stroke-linecap="round"/>
<path d="M634.0 35.0 L647.0 56.0 L652.0 62.0 L657.0 66.0 L655.0 75.0 L645.0 81.0 L646.0 89.0 L655.0 95.0 L676.0 104.0 L684.0 118.0 L683.0 133.0 L676.0 138.0 L673.0 143.0" fill="none" stroke="#7b80a7" stroke-width="3" stroke-linejoin="round" stroke-linecap="round"/>
<path d="M958.0 285.0 L975.0 270.0 L994.0 269.0 L1028.0 283.0 L1038.0 290.0" fill="none" stroke="#7b80a7" stroke-width="3" stroke-linejoin="round" stroke-linecap="round"/>
<path d="M1038.0 290.0 L1051.0 300.0 L1047.0 313.0 L1047.0 330.0 L1062.0 339.0" fill="none" stroke="#7b80a7" stroke-width="3" stroke-linejoin="round" stroke-linecap="round"/>
<rect x="445" y="118" width="17" height="11" fill="#9fa3c0"/>
<text x="453.5" y="127" text-anchor="middle" font-family="Liberation Sans" font-size="10" fill="#e8e9f0">N5</text>
<rect x="644" y="53" width="16" height="11" fill="#9fa3c0"/>
<text x="652.0" y="62" text-anchor="middle" font-family="Liberation Sans" font-size="10" fill="#e8e9f0">N3</text>
<rect x="628" y="129" width="16" height="11" fill="#9fa3c0"/>
<text x="636.0" y="138" text-anchor="middle" font-family="Liberation Sans" font-size="10" fill="#e8e9f0">N5</text>
<rect x="928" y="268" width="16" height="11" fill="#9fa3c0"/>
<text x="936.0" y="277" text-anchor="middle" font-family="Liberation Sans" font-size="10" fill="#e8e9f0">N3</text>
<rect x="759" y="181" width="15" height="11" fill="#9fa3c0"/>
<text x="766.5" y="190" text-anchor="middle" font-family="Liberation Sans" font-size="10" fill="#e8e9f0">N5</text>
<path d="M683.5 133.0 C682.2 133.9 677.7 137.0 676.0 138.5 C674.3 140.0 674.0 140.8 673.5 142.0 C673.0 143.2 673.3 144.9 673.3 145.5" fill="none" stroke="#3b3bf2" stroke-width="3.5" stroke-linejoin="round" stroke-linecap="round"/>
<path d="M683.5 156.0 C685.3 157.4 688.8 159.7 694.3 164.3 C699.8 168.9 710.8 179.7 716.4 183.8 C722.0 187.9 722.8 188.0 728.0 189.0 C733.2 190.0 742.2 189.8 747.6 189.7 C753.0 189.6 755.6 189.5 760.6 188.4 C765.6 187.3 771.4 184.0 777.5 183.2 C783.6 182.4 791.8 183.5 797.0 183.8 C802.2 184.1 806.1 183.9 808.7 185.0 C811.3 186.1 811.1 188.9 812.6 190.3 C814.1 191.7 816.1 193.5 817.8 193.6 C819.5 193.7 821.0 192.3 823.0 191.0 C825.0 189.7 827.3 186.1 829.5 185.8 C831.7 185.5 834.4 188.2 836.0 189.0 C837.6 189.8 837.1 188.1 839.1 190.7 C841.1 193.3 844.7 201.0 848.3 204.4 C851.9 207.8 856.2 208.9 860.5 211.2 C864.8 213.5 869.9 215.8 874.2 218.1 C878.5 220.4 883.4 222.2 886.4 225.0 C889.4 227.8 891.4 231.2 892.5 234.9 C893.6 238.6 892.2 243.2 893.2 247.0 C894.2 250.8 895.9 255.0 898.6 257.7 C901.3 260.4 905.9 261.2 909.2 263.0 C912.5 264.8 914.1 266.9 918.4 268.4 C922.7 269.9 928.4 269.4 935.0 272.2 C941.6 275.0 954.2 283.0 958.0 285.1" fill="none" stroke="#3b3bf2" stroke-width="3.5" stroke-linejoin="round" stroke-linecap="round"/>
<path d="M669 149.3 L680.5 142 L680 151.3 L684.5 159 Z" fill="#1414f8" stroke="#fff" stroke-width="1.2" stroke-linejoin="miter"/>
<path d="M933.5 271.6 L919.6 262.2 L921 269.6 L916.4 275 Z" fill="#1414f8" stroke="#fff" stroke-width="1.2" stroke-linejoin="miter"/>
</svg>
<div class="a" style="left:427px;top:35px;width:803px;height:4px;background:linear-gradient(rgba(0,0,0,.18),rgba(0,0,0,0))"></div>
<div class="a" style="left:427px;top:35px;width:4px;height:304px;background:linear-gradient(90deg,rgba(0,0,0,.12),rgba(0,0,0,0))"></div>
<div class="t" style="left:634px;top:103px;color:#333;text-shadow:0 0 2px #fff">Harrismith</div>
<div class="mbtn" style="top:50px"></div>
<div class="mbtn" style="top:90px"></div>
<div class="mbtn" style="top:130px"></div>
<div class="mbtn" style="top:170px"></div>
<div class="mbtn" style="top:210px;height:53px"></div>
<div class="a" style="left:442px;top:236px;width:26px;height:1px;background:#ddd"></div>
<svg class="a" style="left:442px;top:50px" width="26" height="215" viewBox="442 50 26 215">
 <circle cx="454" cy="61.8" r="4.3" fill="none" stroke="#555" stroke-width="1.1"/>
 <path d="M457.2 65 L461 68.8" stroke="#555" stroke-width="1.3" stroke-linecap="round"/>
 <path d="M447.5 103 Q455 96 462.5 103 Q455 110 447.5 103 Z" fill="none" stroke="#555" stroke-width="1.1"/>
 <circle cx="455" cy="102.5" r="2.5" fill="#555"/><circle cx="454.3" cy="101.6" r="0.9" fill="#fff"/>
 <path d="M447.5 137.5 L451.5 136 L458 138 L462.5 136.5 V148.5 L458 150 L451.5 148 L447.5 149.5 Z" fill="#555"/>
 <path d="M451.5 136 V148 M458 138 V150" stroke="#fff" stroke-width="0.9"/>
 <rect x="447.5" y="176" width="15" height="12.8" rx="1" fill="#555"/>
 <path d="M458 188.5 L462.5 192.5 L462.5 188.5 Z" fill="#555"/>
 <circle cx="455" cy="180" r="1.9" fill="#fff"/>
 <path d="M451 186.5 Q455 181.5 459 186.5 Z" fill="#fff"/>
 <path d="M455 217.5 V228.5 M449.5 223 H460.5" stroke="#555" stroke-width="1.6"/>
 <path d="M449.5 249.5 H460.5" stroke="#555" stroke-width="1.6"/>
</svg>
<div class="a" style="left:450px;top:272px;width:10px;height:67px;background:#888;border-radius:5px 5px 0 0;opacity:.85"></div>
<div class="t" style="left:441px;top:299px;font-size:10px;letter-spacing:0;line-height:11px;color:#555;text-shadow:0 0 1px #fff,0 0 2px #fff;transform:rotate(-35deg);transform-origin:0 9px">Maloti Rte</div>
<svg class="a" style="left:427px;top:280px" width="100" height="35" viewBox="427 280 100 35">
 <path d="M438 286.2 V311.1 M438 298.8 H514 M513.9 286.2 V298.8 M487.9 298.8 V311.1" fill="none" stroke="#111" stroke-width="2"/>
</svg>
<div class="t b" style="left:463px;top:285px;font-size:11.5px;letter-spacing:0;line-height:13px;color:#111">5 km</div>
<div class="t b" style="left:452px;top:299px;font-size:11.5px;letter-spacing:0;line-height:13px;color:#111">2 mi</div>
<div class="t b" style="left:437px;top:311px;font-size:11.8px;letter-spacing:0;color:#111">Mapping data &copy; 2021 HERE. All rights reserved.</div>
<div class="t b" style="left:1080px;top:311px;font-size:12.8px;letter-spacing:0;color:#111">-28.385244&deg; : 29.423650&deg;</div>

<!-- TABLE -->
<div class="a" style="left:436px;top:347px;width:75px;height:28px;border:1px solid #b8b8b8;border-radius:3px;background:#fff"></div>
<div class="a" style="left:437px;top:348px;width:36px;height:26px;background:#3396f4"></div>
<svg class="a" style="left:436px;top:347px" width="75" height="28" viewBox="0 0 75 28">
 <rect x="11" y="7.5" width="16" height="14.5" fill="#fff"/>
 <g fill="#3396f4">
  <rect x="12.6" y="10.2" width="3.6" height="2.6"/><rect x="17.2" y="10.2" width="3.6" height="2.6"/><rect x="21.8" y="10.2" width="3.6" height="2.6"/>
  <rect x="12.6" y="13.8" width="3.6" height="2.6"/><rect x="17.2" y="13.8" width="3.6" height="2.6"/><rect x="21.8" y="13.8" width="3.6" height="2.6"/>
  <rect x="12.6" y="17.4" width="3.6" height="2.9"/><rect x="17.2" y="17.4" width="3.6" height="2.9"/><rect x="21.8" y="17.4" width="3.6" height="2.9"/>
 </g>
 <path d="M48.3 7.5 V21.7 H64.5" fill="none" stroke="#1d5f9a" stroke-width="1.2"/>
 <path d="M49 21.5 L53.8 14 H59.5 L64 7.5" fill="none" stroke="#1a62a6" stroke-width="1.8"/>
</svg>
<div class="a" style="left:428px;top:408px;width:802px;height:250px;overflow:hidden">
<div class="a" style="left:0;top:-11px;width:658px;height:24px;background:#fed6a7"></div>
<div class="cell" style="left:8px;top:-6px">70</div>
<div class="cell" style="left:46px;top:-6px">17.07.2021 21:10:53</div>
<div class="cell" style="left:172px;top:-6px">72</div>
<div class="cell" style="left:260px;top:-6px">-28.31997, 29.23605 (9)</div>
<div class="cell" style="left:406px;top:-6px">0</div>
<div class="cell" style="left:485px;top:-6px">9930.26 km</div>
<div class="cb" style="left:626px;top:-5px"></div>
<div class="a" style="left:0;top:14px;width:658px;height:24px;background:#fed6a7"></div>
<div class="cell" style="left:8px;top:19px">71</div>
<div class="cell" style="left:46px;top:19px">17.07.2021 21:11:02</div>
<div class="cell" style="left:172px;top:19px">75</div>
<div class="cell" style="left:260px;top:19px">-28.31852, 29.23737 (9)</div>
<div class="cell" style="left:406px;top:19px">0</div>
<div class="cell" style="left:485px;top:19px">9930.47 km</div>
<div class="cb" style="left:626px;top:20px"></div>
<div class="a" style="left:0;top:38px;width:658px;height:25px;background:#fed6a7"></div>
<div class="cell" style="left:8px;top:43px">72</div>
<div class="cell" style="left:46px;top:43px">17.07.2021 21:11:16</div>
<div class="cell" style="left:172px;top:43px">73</div>
<div class="cell" style="left:260px;top:43px">-28.31695, 29.2384 (8)</div>
<div class="cell" style="left:406px;top:43px">0</div>
<div class="cell" style="left:485px;top:43px">9930.67 km</div>
<div class="cb" style="left:626px;top:44px"></div>
<div class="a" style="left:0;top:63px;width:658px;height:24px;background:#fed6a7"></div>
<div class="cell" style="left:8px;top:68px">73</div>
<div class="cell" style="left:46px;top:68px">17.07.2021 21:11:56</div>
<div class="cell" style="left:172px;top:68px">89</div>
<div class="cell" style="left:260px;top:68px">-28.31638, 29.24211 (9)</div>
<div class="cell" style="left:406px;top:68px">0</div>
<div class="cell" style="left:485px;top:68px">9931.03 km</div>
<div class="cb" style="left:626px;top:69px"></div>
<div class="a" style="left:0;top:87px;width:658px;height:25px;background:#e2e2e2"></div>
<div class="cell" style="left:8px;top:92px">74</div>
<div class="cell" style="left:46px;top:92px">17.07.2021 21:11:56</div>
<div class="cell" style="left:172px;top:92px">81</div>
<div class="cell" style="left:260px;top:92px">-28.31615, 29.24016 (9)</div>
<div class="cell" style="left:406px;top:92px">0</div>
<div class="cell" style="left:485px;top:92px">9930.85 km</div>
<div class="cb" style="left:626px;top:93px"></div>
<div class="a" style="left:0;top:112px;width:658px;height:24px;background:#fed6a7"></div>
<div class="cell" style="left:8px;top:117px">75</div>
<div class="cell" style="left:46px;top:117px">17.07.2021 21:11:57</div>
<div class="cell" style="left:172px;top:117px">74</div>
<div class="cell" style="left:260px;top:117px">-28.31756, 29.24408 (9)</div>
<div class="cell" style="left:406px;top:117px">0</div>
<div class="cell" style="left:485px;top:117px">9931.29 km</div>
<div class="cb" style="left:626px;top:118px"></div>
<div class="a" style="left:0;top:136px;width:658px;height:25px;background:#fed6a7"></div>
<div class="cell" style="left:8px;top:141px">76</div>
<div class="cell" style="left:46px;top:141px">17.07.2021 21:11:59</div>
<div class="cell" style="left:172px;top:141px">67</div>
<div class="cell" style="left:260px;top:141px">-28.3187, 29.24555 (9)</div>
<div class="cell" style="left:406px;top:141px">0</div>
<div class="cell" style="left:485px;top:141px">9931.48 km</div>
<div class="cb" style="left:626px;top:142px"></div>
<div class="a" style="left:0;top:161px;width:658px;height:24px;background:#fed6a7"></div>
<div class="cell" style="left:8px;top:166px">77</div>
<div class="cell" style="left:46px;top:166px">17.07.2021 21:11:59</div>
<div class="cell" style="left:172px;top:166px">56</div>
<div class="cell" style="left:260px;top:166px">-28.31968, 29.24678 (9)</div>
<div class="cell" style="left:406px;top:166px">0</div>
<div class="cell" style="left:485px;top:166px">9931.64 km</div>
<div class="cb" style="left:626px;top:167px"></div>
<div class="a" style="left:0;top:185px;width:658px;height:25px;background:#fed6a7"></div>
<div class="cell" style="left:8px;top:190px">78</div>
<div class="cell" style="left:46px;top:190px">17.07.2021 21:12:17</div>
<div class="cell" style="left:172px;top:190px">52</div>
<div class="cell" style="left:260px;top:190px">-28.3206, 29.24789 (9)</div>
<div class="cell" style="left:406px;top:190px">0</div>
<div class="cell" style="left:485px;top:190px">9931.80 km</div>
<div class="cb" style="left:626px;top:191px"></div>
<div class="a" style="left:0;top:210px;width:658px;height:24px;background:#fed6a7"></div>
<div class="cell" style="left:8px;top:215px">79</div>
<div class="cell" style="left:46px;top:215px">17.07.2021 21:12:20</div>
<div class="cell" style="left:172px;top:215px">51</div>
<div class="cell" style="left:260px;top:215px">-28.32145, 29.24895 (9)</div>
<div class="cell" style="left:406px;top:215px">0</div>
<div class="cell" style="left:485px;top:215px">9931.94 km</div>
<div class="cb" style="left:626px;top:216px"></div>
<div class="a" style="left:0;top:234px;width:658px;height:25px;background:#fed6a7"></div>
<div class="cell" style="left:8px;top:239px">80</div>
<div class="cell" style="left:46px;top:239px">17.07.2021 21:12:30</div>
<div class="cell" style="left:172px;top:239px">54</div>
<div class="cell" style="left:260px;top:239px">-28.32243, 29.24994 (9)</div>
<div class="cell" style="left:406px;top:239px">0</div>
<div class="cell" style="left:485px;top:239px">9932.08 km</div>
<div class="cb" style="left:626px;top:240px"></div>
<div class="a" style="left:0;top:13px;width:658px;height:1px;background:#fff"></div>
<div class="a" style="left:0;top:62px;width:658px;height:1px;background:#fff"></div>
<div class="a" style="left:0;top:111px;width:658px;height:1px;background:#fff"></div>
<div class="a" style="left:0;top:160px;width:658px;height:1px;background:#fff"></div>
<div class="a" style="left:0;top:209px;width:658px;height:1px;background:#fff"></div>
<div class="a" style="left:36px;top:0;width:1px;height:250px;background:#d9cfc3"></div>
<div class="a" style="left:163px;top:0;width:1px;height:250px;background:#d9cfc3"></div>
<div class="a" style="left:251px;top:0;width:1px;height:250px;background:#d9cfc3"></div>
<div class="a" style="left:397px;top:0;width:1px;height:250px;background:#d9cfc3"></div>
<div class="a" style="left:476px;top:0;width:1px;height:250px;background:#d9cfc3"></div>
<div class="a" style="left:556px;top:0;width:1px;height:250px;background:#d9cfc3"></div>
<div class="a" style="left:607px;top:0;width:1px;height:250px;background:#d9cfc3"></div>
<div class="a" style="left:657px;top:0;width:1px;height:250px;background:#fff"></div>
<div class="a" style="left:789px;top:1px;width:13px;height:249px;background:#f1f1f1"></div>
<div class="a" style="left:791px;top:100px;width:11px;height:44px;background:#c1c1c1"></div>
<div class="a" style="left:792px;top:6px;width:0;height:0;border-left:4px solid transparent;border-right:4px solid transparent;border-bottom:5px solid #505050"></div>
<div class="a" style="left:792px;top:239px;width:0;height:0;border-left:4px solid transparent;border-right:4px solid transparent;border-top:5px solid #505050"></div>
</div>
<div class="a" style="left:428px;top:383px;width:802px;height:26px;background:#fff;border-top:1px solid #d0d0d0;border-bottom:1px solid #d0d0d0"></div>
<div class="a" style="left:465px;top:384px;width:126px;height:24px;background:#e0e0e0"></div>
<div class="a" style="left:464px;top:384px;width:1px;height:24px;background:#d0d0d0"></div>
<div class="a" style="left:591px;top:384px;width:1px;height:24px;background:#d0d0d0"></div>
<div class="a" style="left:679px;top:384px;width:1px;height:24px;background:#d0d0d0"></div>
<div class="a" style="left:825px;top:384px;width:1px;height:24px;background:#d0d0d0"></div>
<div class="a" style="left:904px;top:384px;width:1px;height:24px;background:#d0d0d0"></div>
<div class="a" style="left:984px;top:384px;width:1px;height:24px;background:#d0d0d0"></div>
<div class="a" style="left:1035px;top:384px;width:1px;height:24px;background:#d0d0d0"></div>
<div class="a" style="left:1085px;top:384px;width:1px;height:24px;background:#d0d0d0"></div>
<div class="t b" style="left:436px;top:389px;color:#111">#</div>
<div class="t b" style="left:489px;top:389px;color:#111">Time</div>
<div class="t b" style="left:600px;top:389px;color:#111">Speed, km/h</div>
<div class="t b" style="left:688px;top:389px;color:#111">Coordinates</div>
<div class="t b" style="left:834px;top:389px;color:#111">Altitude, m</div>
<div class="t b" style="left:913px;top:389px;color:#111">Mileage</div>
<div class="t b" style="left:993px;top:389px;color:#111">Media</div>
<div class="a" style="left:478px;top:394px;width:0;height:0;border-left:3.5px solid transparent;border-right:3.5px solid transparent;border-top:4px solid #777"></div>
<div class="cb" style="left:1054px;top:391px"></div>
<div class="a" style="left:426px;top:469px;width:558px;height:78px;border:2px solid #0a0af5"></div>
<div class="a" style="left:467px;top:473px;width:122px;height:47px;border:2px solid #ec1a1a"></div>
<div class="a" style="left:428px;top:658px;width:802px;height:1px;background:#d0d0d0"></div>
<svg class="a" style="left:436px;top:664px" width="22" height="22" viewBox="0 0 22 22">
 <path d="M6 13.5 L8.4 6 H8.8 L11.2 13.5 M6.9 10.8 H10.3" fill="none" stroke="#f0145a" stroke-width="1.1"/>
 <path d="M2.6 16.5 H17.4" stroke="#555" stroke-width="1"/>
 <path d="M5 14.3 L2.3 16.5 L5 18.7 M15 14.3 L17.7 16.5 L15 18.7" fill="none" stroke="#555" stroke-width="1"/>
</svg>
<div class="sel" style="left:465px;top:663px;width:60px;height:24px"></div>
<div class="t" style="left:472px;top:668px;color:#333">50</div>
<div class="chev" style="left:512px;top:670px"></div>
<svg class="a" style="left:535px;top:664px" width="225" height="22" viewBox="535 664 225 22">
 <g fill="none" stroke="#2a82d6" stroke-width="1.3">
  <path d="M545 673 L541 676.3 L545 679.6 M549 673 L545 676.3 L549 679.6"/>
  <path d="M570.5 672.5 L566.5 676.3 L570.5 680"/>
  <path d="M720 672.5 L724 676.3 L720 680"/>
  <path d="M742.5 673 L746.5 676.3 L742.5 679.6 M746.5 673 L750.5 676.3 L746.5 679.6"/>
 </g>
</svg>
<div class="t" style="left:581px;top:668px;color:#111">Page</div>
<div class="sel" style="left:617px;top:663px;width:61px;height:24px"></div>
<div class="t" style="left:624px;top:668px;color:#333">2</div>
<div class="t" style="left:686px;top:668px;color:#111">of 3</div>
<div class="t" style="left:766px;top:668px;color:#111">Displaying 51 to 100 from 133 messages</div>
<div class="a" style="left:996px;top:663px;width:141px;height:24px;border:1px solid #bdbdbd;border-radius:3px;background:#efefef"></div>
<svg class="a" style="left:1140px;top:664px" width="90" height="22" viewBox="1140 664 90 22">
 <path d="M1146.5 668.5 H1161 L1155.5 674.5 V681.5 L1152 679.5 V674.5 Z" fill="none" stroke="#888" stroke-width="1.2" stroke-linejoin="round"/>
 <path d="M1179.5 672.8 L1187.8 681.2 M1187.8 672.8 L1179.5 681.2" stroke="#777" stroke-width="1.3"/>
 <g fill="#555"><circle cx="1213" cy="670.5" r="1.3"/><circle cx="1213" cy="676" r="1.3"/><circle cx="1213" cy="681.5" r="1.3"/></g>
</svg>
<!-- FOOTER -->
<div class="foot"></div>
<svg class="a" style="left:0;top:692px" width="70" height="30" viewBox="0 692 70 30">
 <rect x="9.35" y="700.25" width="15.5" height="13.3" fill="none" stroke="#fff" stroke-width="1.1"/>
 <rect x="8.8" y="699.7" width="4.9" height="14.4" fill="#fff"/>
 <g fill="#fff">
  <rect x="41.6" y="699.7" width="4.2" height="4.3"/><rect x="46.8" y="699.7" width="4.2" height="4.3"/><rect x="52" y="699.7" width="4.2" height="4.3"/>
  <rect x="41.6" y="705" width="4.2" height="4.2"/><rect x="46.8" y="705" width="4.2" height="4.2"/><rect x="52" y="705" width="4.2" height="4.2"/>
  <rect x="41.6" y="710.2" width="4.2" height="4.2"/><rect x="46.8" y="710.2" width="4.2" height="4.2"/><rect x="52" y="710.2" width="4.2" height="4.2"/>
 </g>
</svg>
<div class="t" style="left:486px;top:700px;color:#f2f2f2">&copy; Gurtam</div>
<svg class="a" style="left:960px;top:692px" width="180" height="30" viewBox="960 692 180 30">
 <g fill="#a8a8a8">
  <rect x="975.5" y="700" width="17.5" height="14"/>
 </g>
 <rect x="977" y="703.5" width="14.5" height="9" fill="#787878"/>
 <rect x="978.5" y="705.5" width="11" height="1.3" fill="#a8a8a8"/>
 <rect x="978.5" y="708.5" width="7" height="1.3" fill="#a8a8a8"/>
 <path d="M1017 701 H1033 M1017 701 V713 H1030 M1017 701 L1025 707.5 L1033 701 V705" fill="none" stroke="#a8a8a8" stroke-width="1.6"/>
 <path d="M1031 705 L1035 708 L1031 711 M1039 708 L1034 708 M1028 709 L1032 712 L1028 715 M1035 712 L1029 712" fill="none" stroke="#a8a8a8" stroke-width="1.4"/>
 <rect x="1058.5" y="701" width="15.5" height="13" fill="none" stroke="#a8a8a8" stroke-width="1.5"/>
 <path d="M1059.5 713 L1064.5 707 L1067.5 710 L1070 708 L1073 713 Z" fill="#a8a8a8"/>
 <circle cx="1062.5" cy="704.5" r="1.4" fill="#a8a8a8"/>
 <rect x="1098" y="700.5" width="9" height="14" fill="#fff"/>
 <rect x="1108.5" y="700.5" width="9.5" height="14" fill="#fff"/>
 <rect x="1099.5" y="703" width="5" height="1.2" fill="#787878"/>
 <rect x="1099.5" y="706.5" width="5" height="1.2" fill="#787878"/>
 <rect x="1099.5" y="710" width="3" height="1.2" fill="#787878"/>
</svg>
<div class="t" style="left:1142px;top:700px;color:#f2f2f2">16:49:34 (+03)</div>

</body></html>
